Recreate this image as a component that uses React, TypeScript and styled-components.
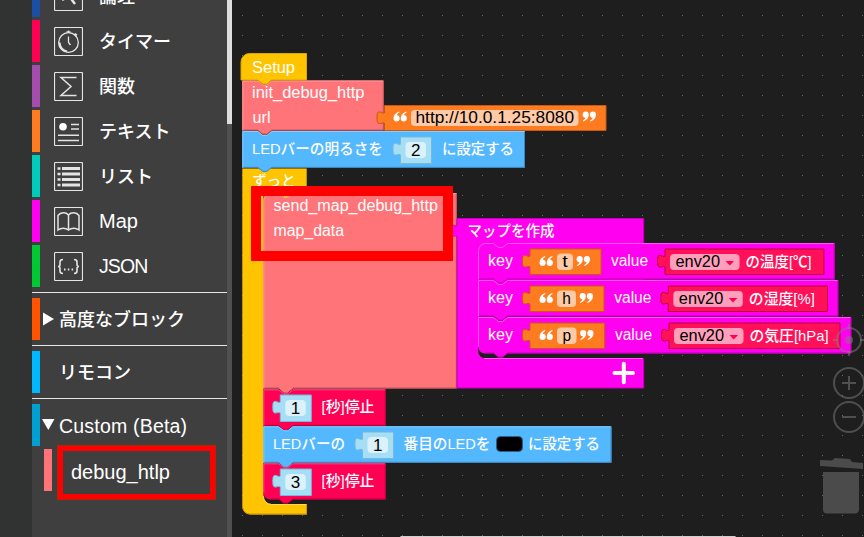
import React from 'react';
import styled, { createGlobalStyle } from 'styled-components';

const Global = createGlobalStyle`
  * { box-sizing: border-box; }
  body { margin: 0; overflow: hidden; background: #1e1e1e; }
`;

const LATIN = `'Liberation Sans', 'Noto Sans CJK JP', sans-serif`;

const Page = styled.div`
  display: flex;
  width: 864px;
  height: 537px;
  overflow: hidden;
  font-family: ${LATIN};
  font-weight: 500;
  color: #fff;
`;

const Rail = styled.div`
  flex: 0 0 32px;
  background: #303332;
`;

const Toolbox = styled.nav`
  flex: 0 0 195px;
  height: 537px;
  overflow: hidden;
  background: #3f3f3f;
`;

const Scrollbar = styled.div`
  flex: 0 0 5px;
  background: #505050;
`;

const Thumb = styled.div`
  height: 124px;
  background: #dedede;
`;

const CategoryList = styled.div`
  display: flex;
  flex-direction: column;
  gap: 3px;
  margin-top: -25px;
`;

const Category = styled.div<{ $color: string }>`
  display: flex;
  align-items: center;
  height: 42px;
  border-left: 8px solid ${(p) => p.$color};
`;

const IconBox = styled.svg`
  flex: none;
  width: 29px;
  height: 29px;
  margin: 0 16px 0 14px;
  fill: none;
  stroke: #e4e4e4;
`;

const Label = styled.span<{ $size?: number; $spacing?: number; $left?: number; $drop?: number }>`
  font-size: ${(p) => p.$size ?? 18}px;
  letter-spacing: ${(p) => p.$spacing ?? 0}px;
  padding-left: ${(p) => p.$left ?? 0}px;
  padding-top: ${(p) => p.$drop ?? 2}px;
  line-height: 26px;
  white-space: nowrap;
`;

const Separator = styled.div`
  height: 1px;
  margin: 5px 0;
  background: #e6e6e6;
`;

const Arrow = styled.svg`
  flex: none;
  width: 15px;
  height: 14px;
  margin-left: 2px;
  fill: #fff;
`;

const CustomItem = styled.div`
  display: flex;
  height: 56px;
  margin: -1px 0 0 12px;
`;

const CustomBar = styled.div`
  width: 8px;
  height: 42px;
  margin-top: 4px;
  background: #ff7478;
`;

const Highlight = styled.div`
  display: flex;
  width: 159px;
  height: 55px;
  margin-left: 5px;
  border: 6px solid #ff0000;
  outline: 1px solid #b02408;
  outline-offset: -1px;
  padding: 6px 0 0 8px;
`;

const Workspace = styled.main`
  flex: 1;
  height: 537px;
  background: #1e1e1e;
`;

const Canvas = styled.svg`
  display: block;
  width: 632px;
  height: 537px;
  font-family: ${LATIN};
`;

const Shape = styled.path<{ $fill: string; $edge?: string }>`
  fill: ${(p) => p.$fill};
  stroke: ${(p) => p.$edge ?? 'none'};
  stroke-width: 1;
`;

const BlockText = styled.text<{ $dark?: boolean; $size?: number }>`
  fill: ${(p) => (p.$dark ? '#000' : '#fff')};
  font-size: ${(p) => p.$size ?? 15}px;
`;

const Field = styled.rect`
  fill: rgba(255, 255, 255, 0.6);
`;

const Faded = styled.g`
  fill: none;
  stroke: #808080;
  stroke-opacity: 0.5;
  stroke-width: 2;
`;

const C = {
  yellow: '#ffc400',
  salmon: '#ff7478',
  sky: '#54b8ff',
  orange: '#ff7b20',
  magenta: '#ff00f0',
  red: '#ff0055',
  scarlet: '#ff1058',
  pale: '#a5def5',
};

const TextAt = ({ x, y, w, dark, size, children }: {
  x: number; y: number; w: number; dark?: boolean; size?: number; children: string;
}) => (
  <BlockText x={x} y={y} textLength={w} lengthAdjust="spacingAndGlyphs" $dark={dark} $size={size}>
    {children}
  </BlockText>
);

/* A stacked block: notch in the top edge, matching bump under the bottom edge. */
const Statement = ({ x, y, r, b, fill, hi, lo, radiusTop = 0, radiusBottom = 0 }: {
  x: number; y: number; r: number; b: number; fill: string; hi: string; lo: string;
  radiusTop?: number; radiusBottom?: number;
}) => (
  <g>
    <Shape
      $fill={fill}
      d={`M${x} ${y + radiusTop}a${radiusTop} ${radiusTop} 0 0 1 ${radiusTop} -${radiusTop}H${x + 15.5}l5 4h4l5-4H${r}V${b}H${x + 29.5}l-5 4h-4l-5-4H${x + radiusBottom}a${radiusBottom} ${radiusBottom} 0 0 1 -${radiusBottom} -${radiusBottom}Z`}
    />
    <Shape $fill="none" $edge={lo} d={`M${r - 0.5} ${y + 1}V${b - 0.5}H${x + 29.5}l-5 4h-4l-5-4H${x + radiusBottom}`} />
    <Shape
      $fill="none"
      $edge={hi}
      d={`M${x + 0.5} ${b - radiusBottom}V${y + radiusTop + 0.5}a${radiusTop} ${radiusTop} 0 0 1 ${radiusTop} -${radiusTop}H${x + 15.5}l5 4h4l5-4H${r - 1}`}
    />
  </g>
);

/* A value block: the puzzle tab points to the left. */
const Value = ({ x, y, r, b, fill, edge }: {
  x: number; y: number; r: number; b: number; fill: string; edge: string;
}) => (
  <Shape
    $fill={fill}
    $edge={edge}
    d={`M${x} ${y}H${r}V${b}H${x}V${y + 19}c0-5-7.5 4-7.5-5.5v-3c0-9 7.5 0 7.5-4Z`}
  />
);

const NumberInput = ({ x, y, value }: { x: number; y: number; value: string }) => (
  <g>
    <Value x={x} y={y} r={x + 31} b={y + 26.5} fill={C.pale} edge="#79b9d8" />
    <Field x={x + 5} y={y + 5} width={20.5} height={16} rx={4} />
    <TextAt x={x + 10.5} y={y + 18.5} w={9.5} dark size={16.5}>{value}</TextAt>
  </g>
);

const QUOTE = 'M5.400 0C2 1.200 0 3.800 0 7a3.100 3.100 0 1 0 3.400-3.200c.2-1.200 1-2 2.600-2.700zM12.600 0c-3.400 1.200-5.400 3.800-5.400 7a3.100 3.100 0 1 0 3.400-3.200c.2-1.200 1-2 2.600-2.700z';

const OpenQuote = ({ x, y }: { x: number; y: number }) => (
  <path fill="#fff" d={QUOTE} transform={`translate(${x} ${y})`} />
);

const CloseQuote = ({ x, y }: { x: number; y: number }) => (
  <path fill="#fff" d={QUOTE} transform={`translate(${x + 13} ${y + 10}) rotate(180)`} />
);

const entries = [
  { y: 243, r: 834.7, key: 't', keyW: 5.5, orangeEnd: 601, fieldW: 16, shift: 0, redEnd: 824, label: 'の温度[℃]', labelW: 66 },
  { y: 280, r: 838.3, key: 'h', keyW: 8.6, orangeEnd: 604, fieldW: 19, shift: 3.3, redEnd: 827.5, label: 'の湿度[%]', labelW: 66 },
  { y: 317, r: 851.3, key: 'p', keyW: 8.6, orangeEnd: 604.7, fieldW: 19.5, shift: 4, redEnd: 840, label: 'の気圧[hPa]', labelW: 79 },
];

const Entry = ({ e, first, last }: { e: (typeof entries)[number]; first: boolean; last: boolean }) => (
  <g>
    <Statement x={478} y={e.y} r={e.r} b={e.y + 36.5} fill={C.magenta} hi="#ff55f6" lo="#bd00b4"
      radiusTop={first ? 7 : 0} radiusBottom={last ? 7 : 0} />
    <TextAt x={488} y={e.y + 23} w={25} size={16}>key</TextAt>
    <Value x={530} y={e.y + 6} r={e.orangeEnd} b={e.y + 31.5} fill={C.orange} edge="#c65a14" />
    <OpenQuote x={539.5} y={e.y + 13} />
    <Field x={557} y={e.y + 10.5} width={e.fieldW} height={16.5} rx={4} />
    <TextAt x={557 + (e.fieldW - e.keyW) / 2} y={e.y + 24} w={e.keyW} dark size={16}>{e.key}</TextAt>
    <CloseQuote x={561 + e.fieldW} y={e.y + 13} />
    <TextAt x={611 + e.shift} y={e.y + 23} w={37} size={16}>value</TextAt>
    <Value x={665 + e.shift} y={e.y + 6} r={e.redEnd} b={e.y + 31.5} fill={C.scarlet} edge="#b8003e" />
    <Field x={670 + e.shift} y={e.y + 11} width={69.5} height={16} rx={4} />
    <TextAt x={675.5 + e.shift} y={e.y + 24} w={44.5} dark size={16.5}>env20</TextAt>
    <path d={`M${725.5 + e.shift} ${e.y + 18}h8.500l-4.250 4.500z`} fill={C.red} />
    <TextAt x={745.5 + e.shift} y={e.y + 24} w={e.labelW}>{e.label}</TextAt>
  </g>
);

const Blocks = () => (
  <Canvas viewBox="232 0 632 537">
    <defs>
      <pattern id="grid" x="2" y="15" width="20" height="20" patternUnits="userSpaceOnUse">
        <rect width="1" height="1" fill="#666" />
      </pattern>
    </defs>
    <rect x="232" width="632" height="537" fill="url(#grid)" />

    {/* loop frame, drawn under the statements it holds */}
    <Shape $fill={C.yellow} d="M242.300 168.500H306.700V193H263.500V496a8 8 0 0 0 8 8H307V514.500H250.300a8 8 0 0 1-8-8Z" />
    <Shape $fill="none" $edge="#c99a00" d="M306.500 504.500V514H250.300a8 8 0 0 1-7.500-6" />
    <Shape $fill="none" $edge="#ffd64d" d="M263.500 496a8 8 0 0 0 8 8.500H306" />
    <TextAt x={252.5} y={186} w={43}>ずっと</TextAt>

    <Statement x={263.3} y={193} r={456.8} b={388.5} fill={C.salmon} hi="#ff9a9d" lo="#bb5558" radiusTop={7} />
    <path d="M279 192.500h14l-5 4.500h-4z" fill={C.yellow} />
    <TextAt x={273.5} y={211} w={164.5} size={16}>send_map_debug_http</TextAt>
    <TextAt x={273.5} y={236} w={70.5} size={16}>map_data</TextAt>

    <Statement x={242.3} y={131} r={525} b={167.8} fill={C.sky} hi="#84ccff" lo="#3d86bb" />
    <TextAt x={252} y={154} w={131}>LEDバーの明るさを</TextAt>
    <NumberInput x={400.5} y={137} value="2" />
    <TextAt x={442} y={154} w={72}>に設定する</TextAt>

    <Statement x={242.3} y={80.5} r={383.8} b={130.5} fill={C.salmon} hi="#ff9a9d" lo="#bb5558" />
    <Shape $fill={C.yellow} $edge="#d9a700" d="M241 80V62a8.500 8.500 0 0 1 8.500-8.500H306.500V80H271.800l-5 4h-4l-5-4Z" />
    <TextAt x={252} y={73} w={43} size={16}>Setup</TextAt>
    <TextAt x={252} y={98} w={112.5} size={16}>init_debug_http</TextAt>
    <TextAt x={252.5} y={123} w={18} size={16}>url</TextAt>

    <Value x={384.5} y={105.5} r={606} b={130.5} fill={C.orange} edge="#c65a14" />
    <OpenQuote x={393.5} y={111.5} />
    <Field x={411} y={110} width={167.5} height={16} rx={4} />
    <TextAt x={415.5} y={123.3} w={158.5} dark size={16.5}>http://10.0.1.25:8080</TextAt>
    <CloseQuote x={583} y={111.5} />

    <Value x={457} y={218.5} r={643.7} b={388} fill={C.magenta} edge="#c400ba" />
    <path d="M478 300H646V358.500H486a8 8 0 0 1-8-8z" fill="#1e1e1e" />
    <Shape $fill="none" $edge="#ff55f6" d="M484 358.500H643" />
    {entries.map((e, i) => <Entry key={e.key} e={e} first={i === 0} last={i === 2} />)}
    <TextAt x={467.5} y={236} w={87}>マップを作成</TextAt>
    <path d="M614.500 373h18.500M623.800 363.700v18.600" stroke="#fff" strokeWidth="4" strokeLinecap="round" />

    <Statement x={263.3} y={463.3} r={385.8} b={499.5} fill={C.red} hi="#ff4d88" lo="#bb003e" radiusBottom={7} />
    <Statement x={263.3} y={426.3} r={611.5} b={462.8} fill={C.sky} hi="#84ccff" lo="#3d86bb" />
    <Statement x={263.3} y={389.3} r={385.8} b={425.8} fill={C.red} hi="#ff4d88" lo="#bb003e" />
    <path d="M278.800 388h14l-5 4.500h-4z" fill={C.salmon} />
    <path d="M278.800 425.300h14l-5 4.500h-4z" fill={C.red} />
    <path d="M278.800 462.300h14l-5 4.500h-4z" fill={C.sky} />
    <NumberInput x={280.3} y={395} value="1" />
    <TextAt x={321.5} y={412} w={53}>[秒]停止</TextAt>
    <TextAt x={273} y={449} w={72}>LEDバーの</TextAt>
    <NumberInput x={362.5} y={432} value="1" />
    <TextAt x={403.5} y={449} w={87}>番目のLEDを</TextAt>
    <rect x="496.500" y="436.500" width="26" height="15" rx="4" stroke="#245f89" />
    <TextAt x={528} y={449} w={72}>に設定する</TextAt>
    <NumberInput x={280.3} y={469} value="3" />
    <TextAt x={321.5} y={486} w={53}>[秒]停止</TextAt>

    <rect x="256" y="191" width="192" height="65" fill="none" stroke="#ff0000" strokeWidth="10" />

    <Faded>
      <circle cx="849" cy="340" r="12" />
      <circle cx="849" cy="340" r="4" fill="#808080" fillOpacity=".5" stroke="none" />
      <path d="M849 324v5M849 351v5M833 340h5M860 340h5" />
      <circle cx="849" cy="383" r="15" />
      <path d="M842 383h14M849 376v14" />
      <circle cx="849" cy="417" r="15" />
      <path d="M842 417h14" />
    </Faded>
    <path fill="#4b4b4b" d="M820 460l12 .500 3-2.500 15 1 2 3 11 1v6l-43-3zM823 472h36v37a4 4 0 0 1-4 4.500h-28a4 4 0 0 1-4-4z" />
    <rect x="400" y="536" width="336" height="4" rx="1.500" fill="#d0d0d0" />
  </Canvas>
);

const Frame = () => <rect x=".5" y=".5" width="28" height="28" rx="1" strokeWidth="1.200" />;

const glyphs: Record<string, React.ReactNode> = {
  logic: <path d="M8 18l3-1.500M15 14l6 8" strokeWidth="2.500" />,
  timer: (
    <>
      <circle cx="14.500" cy="15.500" r="9.800" strokeWidth="1.300" />
      <path d="M14.500 3.500v2.500M12.500 5h4M20 7l2.500 2.500M21 6.500l2 1.500M14.500 9.500v6l2 2.500" strokeWidth="1.300" />
      <path d="M5.500 15.500a9 9 0 0 0 7.500 9" strokeWidth="2.200" />
    </>
  ),
  sum: <path d="M22.500 5.500H7l10 9-10 9h15.500" strokeWidth="1.500" />,
  text: (
    <>
      <circle cx="9" cy="9.800" r="3.800" fill="#fff" stroke="none" />
      <path d="M17 7.500h8M17 12h8M4 18.300h21M4 23.500h21" strokeWidth="1.500" />
    </>
  ),
  list: (
    <>
      <path d="M3.500 6.500h3M3.500 12h3M3.500 17.500h3M3.500 23h3" strokeWidth="2.500" />
      <path d="M8 6.500h18M8 12h18M8 17.500h18M8 23h18" strokeWidth="3" />
    </>
  ),
  map: <path d="M14.500 8c-2.500-3-8-3-10.500.5v14.500c3-2.500 7.500-2.500 10.500 0 3-2.500 7.500-2.500 10.500 0V8.500c-2.500-3.500-8-3.500-10.500-.5v15" strokeWidth="1.500" />,
  json: (
    <>
      <path d="M9 7.500c-2.500 0-3 .7-3 2.500v2.500c0 1.300-.7 2-2 2 1.300 0 2 .7 2 2V19c0 1.800.5 2.500 3 2.500M20 7.500c2.500 0 3 .7 3 2.500v2.500c0 1.300.7 2 2 2-1.300 0-2 .7-2 2V19c0 1.800-.5 2.500-3 2.500" strokeWidth="1.600" />
      <path d="M10 17.500h1.500M13.800 17.500h1.500M17.600 17.500h1.500" strokeWidth="1.800" />
    </>
  ),
};

const categories = [
  { icon: 'logic', label: '論理', color: '#1b4fa3' },
  { icon: 'timer', label: 'タイマー', color: '#ff0055' },
  { icon: 'sum', label: '関数', color: '#a54dac' },
  { icon: 'text', label: 'テキスト', color: '#ff7b20' },
  { icon: 'list', label: 'リスト', color: '#00ccbb' },
  { icon: 'map', label: 'Map', color: '#ff00f0', size: 20, drop: 0 },
  { icon: 'json', label: 'JSON', color: '#00c832', size: 19.5, spacing: -0.9, drop: 0 },
];

export default function App() {
  return (
    <>
      <Global />
      <Page>
        <Rail />
        <Toolbox>
          <CategoryList>
            {categories.map((c) => (
              <Category key={c.icon} $color={c.color}>
                <IconBox viewBox="0 0 29 29"><Frame />{glyphs[c.icon]}</IconBox>
                <Label $size={c.size} $spacing={c.spacing} $drop={c.drop}>{c.label}</Label>
              </Category>
            ))}
          </CategoryList>
          <Separator />
          <Category $color="#ff5500">
            <Arrow viewBox="0 0 15 14"><path d="M1 .5l11 6.500-11 6.500z" /></Arrow>
            <Label $left={2}>高度なブロック</Label>
          </Category>
          <Separator />
          <Category $color="#00b8ff">
            <Label $left={19}>リモコン</Label>
          </Category>
          <Separator />
          <Category $color="#00a0d2">
            <Arrow viewBox="0 0 15 14"><path d="M0 1h12.500l-6.200 11z" /></Arrow>
            <Label $left={2} $size={19.5} $spacing={0.2}>Custom (Beta)</Label>
          </Category>
          <CustomItem>
            <CustomBar />
            <Highlight><Label $size={20}>debug_htlp</Label></Highlight>
          </CustomItem>
        </Toolbox>
        <Scrollbar><Thumb /></Scrollbar>
        <Workspace><Blocks /></Workspace>
      </Page>
    </>
  );
}
